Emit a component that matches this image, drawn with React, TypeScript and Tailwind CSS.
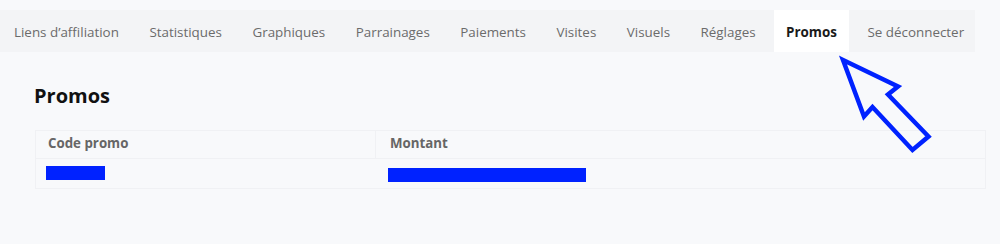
import React from "react";

const tabs = [
  "Liens d’affiliation",
  "Statistiques",
  "Graphiques",
  "Parrainages",
  "Paiements",
  "Visites",
  "Visuels",
  "Réglages",
  "Promos",
  "Se déconnecter",
];

export default function App() {
  return (
    <div
      className="relative w-[1000px] h-[244px] overflow-hidden bg-[#f8f9fb] pt-[10px]"
      style={{ fontFamily: '"Open Sans", "Noto Sans", sans-serif' }}
    >
      <nav className="flex w-[975px] h-[42px] bg-[#f3f4f6] pl-[2px] gap-[6.5px]">
        {tabs.map((t) => {
          const active = t === "Promos";
          return (
            <div
              key={t}
              className={
                "flex flex-none items-center whitespace-nowrap px-3 pt-[3px] text-[13.4px] " +
                (active
                  ? "bg-white font-bold text-[#1a1a1a]"
                  : "text-[#6b6b6b]")
              }
            >
              {t}
            </div>
          );
        })}
      </nav>

      <div className="pl-[34px] pr-[14px]">
        <h2 className="mt-[30px] text-[20px] leading-[28px] font-bold text-[#111]">
          Promos
        </h2>
        <div className="mt-[20px] ml-[1px] w-[951px] border border-[#f0f1f4]">
          <div className="flex h-[28px] border-b border-[#f0f1f4] text-[13.3px] font-bold text-[#666]">
            <div className="w-[340px] pl-[12px] pt-[3px] border-r border-[#f0f1f4]">
              Code promo
            </div>
            <div className="pl-[14px] pt-[3px]">Montant</div>
          </div>
          <div className="flex h-[29px]">
            <div className="w-[340px] pl-[10px] pt-[7px]">
              <div className="w-[59px] h-[14px] bg-[#0022ff]" />
            </div>
            <div className="pl-[12px] pt-[9px]">
              <div className="w-[198px] h-[14px] bg-[#0022ff]" />
            </div>
          </div>
        </div>
      </div>

      <svg
        className="absolute left-0 top-0 pointer-events-none"
        width="1000"
        height="244"
        viewBox="0 0 1000 244"
      >
        <polygon
          points="843,60 898,86.5 888,94.5 928.5,136.5 912.5,150 872.5,107 864,116.5"
          fill="none"
          stroke="#0022ff"
          strokeWidth="4.5"
          strokeLinejoin="miter"
        />
      </svg>
    </div>
  );
}
